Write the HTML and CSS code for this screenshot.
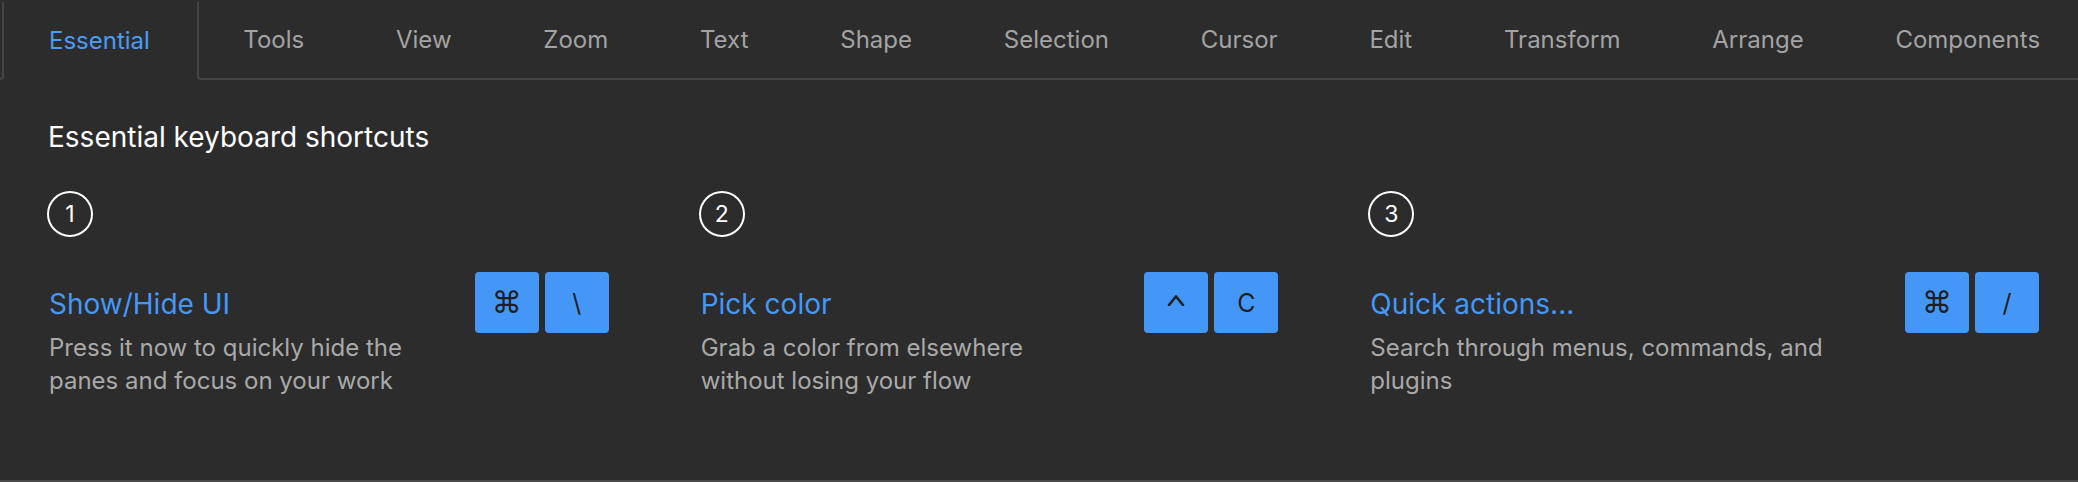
FILE: index.html
```html
<!DOCTYPE html>
<html lang="en">
<head>
<meta charset="utf-8">
<title>Keyboard shortcuts</title>
<link rel="stylesheet" href="styles.css">
</head>
<body>
<div class="panel">
  <nav class="tabbar">
    <span class="tab-stub"></span>
    <a class="tab tab-active">Essential</a>
    <div class="tab-rest">
      <a class="tab">Tools</a>
      <a class="tab">View</a>
      <a class="tab">Zoom</a>
      <a class="tab">Text</a>
      <a class="tab">Shape</a>
      <a class="tab">Selection</a>
      <a class="tab">Cursor</a>
      <a class="tab">Edit</a>
      <a class="tab">Transform</a>
      <a class="tab">Arrange</a>
      <a class="tab">Components</a>
    </div>
  </nav>

  <section class="content">
    <h2 class="heading">Essential keyboard shortcuts</h2>
    <div class="shortcuts">
      <div class="shortcut">
        <div class="step">1</div>
        <div class="row">
          <div class="info">
            <div class="title">Show/Hide UI</div>
            <p class="desc">Press it now to quickly hide the panes and focus on your work</p>
          </div>
          <div class="keys"><kbd class="key key-sym">⌘</kbd><kbd class="key">\</kbd></div>
        </div>
      </div>
      <div class="shortcut">
        <div class="step">2</div>
        <div class="row">
          <div class="info">
            <div class="title">Pick color</div>
            <p class="desc">Grab a color from elsewhere without losing your flow</p>
          </div>
          <div class="keys">
            <kbd class="key" aria-label="Control"><svg class="caret" width="18" height="12" viewBox="0 0 18 12"><polyline points="2,11 9,2.5 16,11" fill="none" stroke="#1f1f1f" stroke-width="2.6" stroke-linecap="round" stroke-linejoin="round"/></svg></kbd><kbd class="key">C</kbd>
          </div>
        </div>
      </div>
      <div class="shortcut">
        <div class="step">3</div>
        <div class="row">
          <div class="info">
            <div class="title">Quick actions...</div>
            <p class="desc">Search through menus, commands, and plugins</p>
          </div>
          <div class="keys"><kbd class="key key-sym">⌘</kbd><kbd class="key">/</kbd></div>
        </div>
      </div>
    </div>
  </section>
</div>
</body>
</html>
```

FILE: styles.css
```css
* { box-sizing: border-box; }

html, body {
  margin: 0;
  padding: 0;
  background: #2c2c2c;
  font-family: Inter, "Noto Sans", "DejaVu Sans", sans-serif;
}

.panel {
  min-height: 100vh;
  border-bottom: 2px solid #4a4a4a;
  overflow: hidden;
}

.tabbar {
  display: flex;
  align-items: stretch;
  height: 80px;
  padding-top: 2px;
  white-space: nowrap;
}

.tab-stub {
  flex: 0 0 4px;
  border-right: 2px solid #454545;
  border-bottom: 2px solid #454545;
  border-bottom-right-radius: 4px;
}

.tab {
  display: flex;
  align-items: center;
  padding: 0 46px 2px;
  font-size: 24px;
  color: #a3a3a3;
  cursor: pointer;
}

.tab-active {
  color: #4a9cf5;
  padding-left: 45px;
  padding-right: 47px;
}

.tab-rest {
  flex: 1 0 auto;
  display: flex;
  border-left: 2px solid #454545;
  border-bottom: 2px solid #454545;
  border-bottom-left-radius: 4px;
}

.tab-rest .tab {
  padding-left: 44.4px;
  padding-right: 47.4px;
}

.content {
  padding: 40px 39px 0 47px;
}

.heading {
  margin: 0 0 0 1px;
  font-size: 28px;
  line-height: 34px;
  font-weight: 400;
  color: #ffffff;
}

.shortcuts {
  display: grid;
  grid-template-columns: 562fr 580fr 671fr;
  column-gap: 90px;
  margin-top: 37px;
}

.step {
  width: 46px;
  height: 46px;
  border: 2px solid #ffffff;
  border-radius: 50%;
  display: flex;
  align-items: center;
  justify-content: center;
  font-size: 23px;
  color: #ffffff;
}

.row {
  display: flex;
  align-items: flex-start;
  gap: 40px;
  margin-top: 35px;
}

.info {
  flex: 1 1 auto;
  min-width: 0;
  padding-left: 2px;
}

.title {
  height: 61px;
  display: flex;
  align-items: center;
  padding-top: 2px;
  font-size: 28px;
  color: #4598f6;
}

.desc {
  margin: -2px 0 0;
  font-size: 24px;
  line-height: 33px;
  color: #a9a9a9;
}

.keys {
  flex: 0 0 auto;
  display: flex;
  gap: 6px;
}

.key {
  width: 64px;
  height: 61px;
  display: flex;
  align-items: center;
  justify-content: center;
  background: #4597f7;
  border-radius: 4px;
  font-family: Inter, "DejaVu Sans", sans-serif;
  font-size: 25px;
  color: #1f1f1f;
}

.key-sym {
  font-family: "DejaVu Sans", sans-serif;
  font-size: 30px;
}

.caret {
  display: block;
  margin-bottom: 6px;
}
```
